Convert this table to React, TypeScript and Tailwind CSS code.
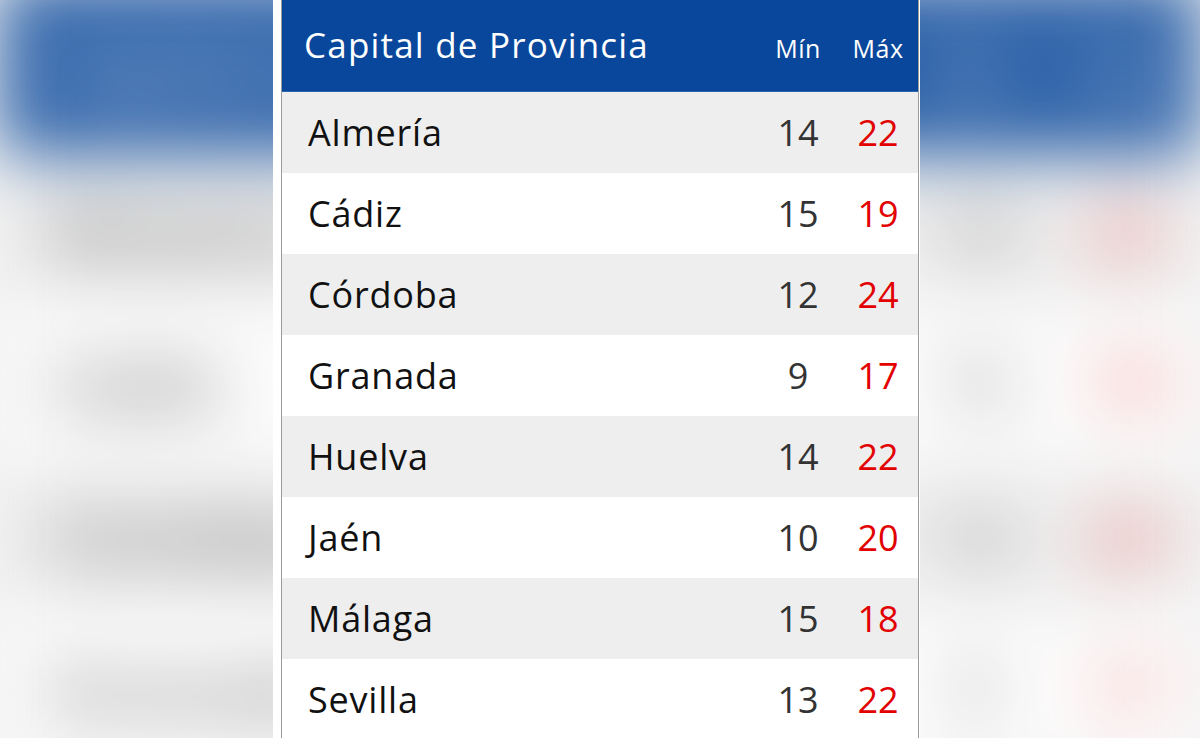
const rows = [
  { city: 'Almería', min: 14, max: 22 },
  { city: 'Cádiz', min: 15, max: 19 },
  { city: 'Córdoba', min: 12, max: 24 },
  { city: 'Granada', min: 9, max: 17 },
  { city: 'Huelva', min: 14, max: 22 },
  { city: 'Jaén', min: 10, max: 20 },
  { city: 'Málaga', min: 15, max: 18 },
  { city: 'Sevilla', min: 13, max: 22 },
];

function Table() {
  return (
    <div className="w-[636px] bg-white font-['Open_Sans',sans-serif]">
      {/* Header */}
      <div className="flex h-[92px] items-baseline border-b border-[#2a64ad] bg-[#08479b] pt-[27px] text-white">
        <div className="flex-1 pl-[22px] text-[35px] leading-none tracking-[1.2px]">
          Capital de Provincia
        </div>
        <div className="w-[80px] text-center text-[25px] leading-none tracking-[0.5px]">Mín</div>
        <div className="w-[80px] text-center text-[25px] leading-none tracking-[0.5px]">Máx</div>
      </div>

      {/* Rows */}
      {rows.map((r, i) => (
        <div
          key={r.city}
          className={`flex h-[81px] items-center ${i % 2 === 0 ? 'bg-[#eeeeee]' : 'bg-white'}`}
        >
          <div className="flex-1 pl-[26px] text-[36px] leading-none tracking-[0.8px] text-[#111111]">
            {r.city}
          </div>
          <div className="w-[80px] text-center text-[36px] leading-none text-[#333333]">{r.min}</div>
          <div className="w-[80px] text-center text-[36px] leading-none text-[#e20000]">{r.max}</div>
        </div>
      ))}
    </div>
  );
}

export default function App() {
  return (
    <div className="relative h-[738px] w-[1200px] overflow-hidden bg-[#f2f2f2]">
      {/* Blurred backdrop */}
      <div className="absolute inset-0 flex justify-center opacity-85">
        <div className="origin-top -translate-y-[20px] scale-[1.89] blur-[18px]">
          <Table />
        </div>
      </div>

      {/* Foreground card */}
      <div className="relative ml-[273px] flex h-full w-[647px] bg-white pl-[8px]">
        <div className="h-full border-x border-[#9a9a9a] bg-white">
          <Table />
        </div>
      </div>
    </div>
  );
}
